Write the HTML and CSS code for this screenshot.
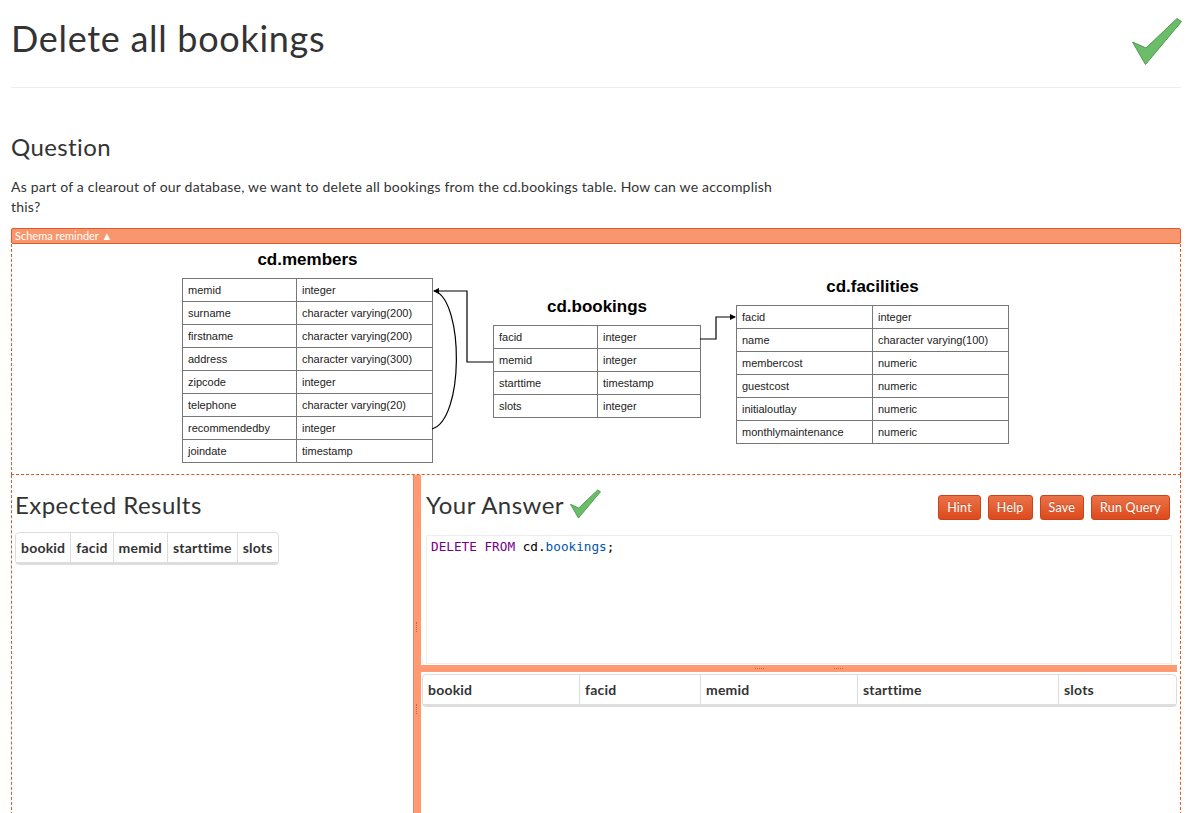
FILE: index.html
```html
<!DOCTYPE html>
<html>
<head>
<meta charset="utf-8">
<link rel="stylesheet" href="styles.css">
</head>
<body>
<div class="page">
  <header class="top">
    <h1>Delete all bookings</h1>
    <svg class="bigcheck" width="50" height="49" viewBox="0 0 50 49"><polygon points="0.5,25 14,31 45,1.5 49.5,4.5 13.5,47.5" fill="#6cbd6a" stroke="#4c9a4c" stroke-width="1" stroke-linejoin="round"/></svg>
  </header>
  <h2 class="qtitle">Question</h2>
  <p class="question">As part of a clearout of our database, we want to delete all bookings from the cd.bookings table. How can we accomplish this?</p>

  <div class="schema-bar">Schema reminder ▲</div>
  <div class="schema">
    <div class="diagram">
      <div class="tbl t-members">
        <div class="tname">cd.members</div>
        <table>
          <tr><td>memid</td><td>integer</td></tr>
          <tr><td>surname</td><td>character varying(200)</td></tr>
          <tr><td>firstname</td><td>character varying(200)</td></tr>
          <tr><td>address</td><td>character varying(300)</td></tr>
          <tr><td>zipcode</td><td>integer</td></tr>
          <tr><td>telephone</td><td>character varying(20)</td></tr>
          <tr><td>recommendedby</td><td>integer</td></tr>
          <tr><td>joindate</td><td>timestamp</td></tr>
        </table>
      </div>
      <div class="tbl t-bookings">
        <div class="tname">cd.bookings</div>
        <table>
          <tr><td>facid</td><td>integer</td></tr>
          <tr><td>memid</td><td>integer</td></tr>
          <tr><td>starttime</td><td>timestamp</td></tr>
          <tr><td>slots</td><td>integer</td></tr>
        </table>
      </div>
      <div class="tbl t-facilities">
        <div class="tname">cd.facilities</div>
        <table>
          <tr><td>facid</td><td>integer</td></tr>
          <tr><td>name</td><td>character varying(100)</td></tr>
          <tr><td>membercost</td><td>numeric</td></tr>
          <tr><td>guestcost</td><td>numeric</td></tr>
          <tr><td>initialoutlay</td><td>numeric</td></tr>
          <tr><td>monthlymaintenance</td><td>numeric</td></tr>
        </table>
      </div>
      <svg class="links" width="1168" height="230" viewBox="0 0 1168 230">
        <defs>
          <marker id="ah" markerWidth="6" markerHeight="6" refX="5" refY="3" orient="auto" markerUnits="userSpaceOnUse">
            <path d="M0,0 L6,3 L0,6 z" fill="#000"/>
          </marker>
        </defs>
        <path d="M481,118 H455 V47 H422" fill="none" stroke="#000" stroke-width="1.2" marker-end="url(#ah)"/>
        <path d="M420,185 C452,176 452,58 423,47" fill="none" stroke="#000" stroke-width="1.2"/>
        <path d="M688,95 H704 V73 H723" fill="none" stroke="#000" stroke-width="1.2" marker-end="url(#ah)"/>
      </svg>
    </div>
  </div>

  <div class="workspace">
    <section class="left">
      <h3>Expected Results</h3>
      <table class="res res-small">
        <thead><tr><th>bookid</th><th>facid</th><th>memid</th><th>starttime</th><th>slots</th></tr></thead>
      </table>
    </section>
    <div class="vsplit"><span class="grip g1"></span><span class="grip g2"></span></div>
    <section class="right">
      <div class="answer-head">
        <h3>Your Answer <svg class="smallcheck" width="31" height="30" viewBox="0 0 50 49"><polygon points="0.5,25 14,31 45,1.5 49.5,4.5 13.5,47.5" fill="#6cbd6a" stroke="#4c9a4c" stroke-width="1.5" stroke-linejoin="round"/></svg></h3>
        <div class="buttons">
          <button class="btn">Hint</button>
          <button class="btn">Help</button>
          <button class="btn">Save</button>
          <button class="btn">Run Query</button>
        </div>
      </div>
      <div class="editor"><code><span class="kw">DELETE</span> <span class="kw">FROM</span> cd.<span class="var">bookings</span>;</code></div>
      <div class="hsplit"><span class="hgrip"></span><span class="hgrip"></span></div>
      <table class="res res-wide">
        <colgroup><col style="width:156px"><col style="width:121px"><col style="width:157px"><col style="width:201px"><col></colgroup>
        <thead><tr><th>bookid</th><th>facid</th><th>memid</th><th>starttime</th><th>slots</th></tr></thead>
      </table>
    </section>
  </div>
</div>
</body>
</html>
```

FILE: styles.css
```css
html, body {
  margin: 0;
  padding: 0;
  background: #fff;
}
body {
  font-family: Lato, "Open Sans", sans-serif;
  color: #333;
  font-size: 14px;
  line-height: 20px;
  letter-spacing: 0.2px;
  overflow: hidden;
}
.page {
  width: 1170px;
  margin-left: 11px;
}
.top {
  display: flex;
  justify-content: space-between;
  align-items: flex-start;
  border-bottom: 1px solid #eee;
  height: 87px;
}
.top h1 {
  margin: 18px 0 0 0;
  font-size: 36px;
  font-weight: 400;
  line-height: 40px;
  letter-spacing: 0.7px;
  color: #333;
}
.bigcheck {
  margin-top: 17px;
  margin-right: -1px;
}
.qtitle {
  margin: 45px 0 0 0;
  font-size: 24px;
  font-weight: 400;
  line-height: 28px;
  letter-spacing: 0.4px;
}
.question {
  width: 780px;
  margin: 16px 0 0 0;
  font-size: 14px;
  line-height: 20px;
}
.schema-bar {
  margin-top: 11px;
  height: 14px;
  background: #f8976d;
  border: 1px solid #e2582b;
  border-radius: 2px;
  color: #fff;
  font-size: 11px;
  line-height: 14px;
  letter-spacing: 0;
  padding-left: 3px;
}
.schema {
  border-left: 1px dashed #d85a26;
  border-right: 1px dashed #d85a26;
  border-bottom: 1px dashed #d85a26;
  height: 230px;
}
.diagram {
  position: relative;
  height: 230px;
  font-family: "Liberation Sans", Arial, sans-serif;
  letter-spacing: 0;
}
.tbl {
  position: absolute;
}
.tname {
  text-align: center;
  font-weight: 700;
  font-size: 17px;
  line-height: 20px;
  color: #000;
}
.tbl table {
  border-collapse: collapse;
  margin-top: 8px;
}
.tbl td {
  border: 1px solid #777;
  height: 22px;
  padding: 0 0 0 5px;
  font-size: 11px;
  line-height: 12px;
  color: #222;
}
.t-members { left: 170px; top: 6px; }
.t-members td:first-child { width: 108px; }
.t-members td:last-child { width: 130px; }
.t-bookings { left: 481px; top: 53px; }
.t-bookings td:first-child { width: 98px; }
.t-bookings td:last-child { width: 97px; }
.t-facilities { left: 724px; top: 33px; }
.t-facilities td:first-child { width: 130px; }
.t-facilities td:last-child { width: 130px; }
.links {
  position: absolute;
  left: 0;
  top: 0;
}
.workspace {
  display: flex;
  height: 345px;
}
.left {
  flex: 0 0 auto;
  box-sizing: border-box;
  width: 402px;
  border-left: 1px dashed #d85a26;
  padding-left: 3px;
}
.left h3, .right h3 {
  margin: 16px 0 0 0;
  font-size: 24px;
  font-weight: 400;
  line-height: 28px;
  letter-spacing: 0.45px;
  color: #333;
}
.vsplit {
  flex: 0 0 auto;
  position: relative;
  box-sizing: border-box;
  width: 8px;
  background: #ff9a72;
  border-left: 1px solid #f0865e;
}
.grip {
  position: absolute;
  left: 2px;
  width: 0;
  height: 10px;
  border-left: 1px dotted #c8663e;
}
.g1 { top: 147px; }
.g2 { top: 229px; }
.right {
  flex: 1 1 auto;
  min-width: 0;
  display: flex;
  flex-direction: column;
  border-right: 1px dashed #d85a26;
}
.answer-head {
  display: flex;
  justify-content: space-between;
  align-items: flex-start;
  padding-left: 5px;
  padding-right: 10px;
}
.right h3 {
  display: flex;
  align-items: center;
  gap: 6px;
}
.smallcheck {
  margin-top: -2px;
}
.buttons {
  display: flex;
  gap: 7px;
  margin-top: 20px;
}
.btn {
  height: 25px;
  padding: 0 8px;
  border: 1px solid #c9441a;
  border-radius: 3px;
  background: linear-gradient(#eb7248, #dc4a1c);
  color: #fff;
  font-family: Lato, "Open Sans", sans-serif;
  font-size: 12.5px;
  letter-spacing: 0.2px;
  line-height: 23px;
  text-shadow: 0 -1px 0 rgba(0,0,0,0.2);
  cursor: pointer;
}
.editor {
  margin: 15px 8px 0 5px;
  height: 129px;
  border: 1px solid #eee;
  padding: 3px 4px;
  box-sizing: border-box;
  font-family: "DejaVu Sans Mono", monospace;
  font-size: 12.7px;
  letter-spacing: 0;
  line-height: 16px;
  color: #000;
}
.kw { color: #770088; }
.var { color: #0055aa; }
.hsplit {
  height: 7px;
  margin-right: 3px;
  margin-top: 1px;
  background: #ff9a72;
  display: flex;
  justify-content: center;
  align-items: center;
  gap: 70px;
}
.hgrip {
  width: 9px;
  height: 0;
  border-top: 1px dotted #c8663e;
}
table.res {
  border-collapse: separate;
  border-spacing: 0;
  border: 1px solid #ddd;
  border-radius: 4px;
}
table.res th {
  text-align: left;
  font-weight: 700;
  font-size: 14px;
  line-height: 20px;
  color: #333;
  padding: 5px 5px 4px 5px;
  border-left: 1px solid #ddd;
  border-bottom: 2px solid #ddd;
}
table.res th:first-child { border-left: 0; }
.res-small {
  margin-top: 13px;
}
.res-wide {
  margin: 2px 4px 0 1px;
  width: 755px;
  table-layout: fixed;
}
```
